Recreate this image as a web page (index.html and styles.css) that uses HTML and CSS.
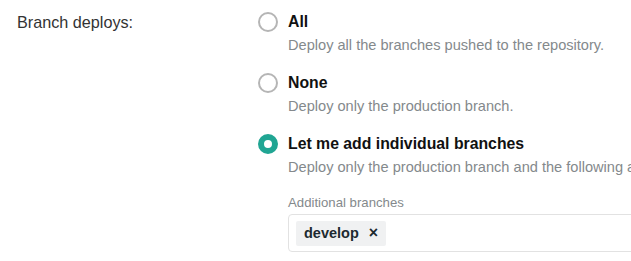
FILE: index.html
```html
<!DOCTYPE html>
<html lang="en">
<head>
  <meta charset="UTF-8" />
  <title>Branch deploys</title>
  <link rel="stylesheet" href="styles.css">
</head>
<body>
  <div class="setting">
    <div class="setting-label">Branch deploys:</div>
    <div class="options">
      <label class="option">
        <span class="radio"></span>
        <span class="option-text">
          <span class="option-title">All</span>
          <span class="option-desc">Deploy all the branches pushed to the repository.</span>
        </span>
      </label>
      <label class="option">
        <span class="radio"></span>
        <span class="option-text">
          <span class="option-title">None</span>
          <span class="option-desc">Deploy only the production branch.</span>
        </span>
      </label>
      <label class="option">
        <span class="radio checked"></span>
        <span class="option-text">
          <span class="option-title">Let me add individual branches</span>
          <span class="option-desc">Deploy only the production branch and the following additional branches.</span>
        </span>
      </label>

      <div class="branches">
        <div class="field-label">Additional branches</div>
        <div class="tag-input">
          <span class="tag">develop <span class="tag-remove">&times;</span></span>
        </div>
      </div>
    </div>
  </div>
</body>
</html>
```

FILE: styles.css
```css
body {
  margin: 0;
  padding: 12px 0 0 17px;
  font-family: "Liberation Sans", Arial, sans-serif;
  background: #fff;
  color: #0e1e25;
  overflow: hidden;
}

.setting {
  display: flex;
}

.setting-label {
  width: 241px;
  flex-shrink: 0;
  font-size: 16.2px;
  line-height: 20px;
  color: #333;
}

.options {
  display: flex;
  flex-direction: column;
  white-space: nowrap;
  min-width: 0;
  overflow: hidden;
}

.option {
  display: flex;
  gap: 10px;
  height: 61px;
}

.radio {
  width: 16px;
  height: 16px;
  margin-top: 0;
  border: 2px solid #b5b5b5;
  border-radius: 50%;
  flex-shrink: 0;
}

.radio.checked {
  width: 8px;
  height: 8px;
  border: 6px solid #20a593;
}

.option-text {
  display: flex;
  flex-direction: column;
}

.option-title {
  font-size: 15.8px;
  font-weight: bold;
  line-height: 20px;
  color: #111;
}

.option-desc {
  margin-top: 3px;
  font-size: 14.6px;
  line-height: 20px;
  color: #84898c;
}

.branches {
  margin-left: 30px;
  margin-top: 0;
}

.field-label {
  font-size: 13.2px;
  line-height: 16px;
  color: #84898c;
  margin-bottom: 3px;
}

.tag-input {
  width: 400px;
  height: 24px;
  padding: 6px 7px;
  border: 1px solid #e2e2e2;
  border-radius: 4px;
}

.tag {
  display: inline-block;
  padding: 2px 8px 3px;
  line-height: 20px;
  background: #f0f1f2;
  border-radius: 2px;
  font-size: 14.5px;
  font-weight: bold;
  color: #1d2a30;
}

.tag-remove {
  margin-left: 6px;
  font-size: 16px;
}
```
